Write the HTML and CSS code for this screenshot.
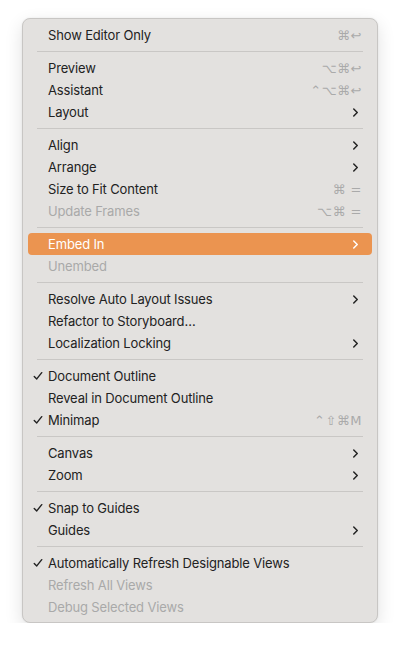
FILE: index.html
```html
<!DOCTYPE html>
<html>
<head>
<meta charset="utf-8">
<link rel="stylesheet" href="styles.css">
</head>
<body>
<div class="menu">
  <div class="item"><span class="check"></span><span class="label">Show Editor Only</span><span class="key">⌘↩</span></div>
  <div class="sep"></div>
  <div class="item"><span class="check"></span><span class="label">Preview</span><span class="key">⌥⌘↩</span></div>
  <div class="item"><span class="check"></span><span class="label">Assistant</span><span class="key">⌃⌥⌘↩</span></div>
  <div class="item"><span class="check"></span><span class="label">Layout</span><svg class="chev" viewBox="0 0 8 12"><path d="M2 2 L6 6 L2 10"/></svg></div>
  <div class="sep"></div>
  <div class="item"><span class="check"></span><span class="label">Align</span><svg class="chev" viewBox="0 0 8 12"><path d="M2 2 L6 6 L2 10"/></svg></div>
  <div class="item"><span class="check"></span><span class="label">Arrange</span><svg class="chev" viewBox="0 0 8 12"><path d="M2 2 L6 6 L2 10"/></svg></div>
  <div class="item"><span class="check"></span><span class="label">Size to Fit Content</span><span class="key">⌘ =</span></div>
  <div class="item disabled"><span class="check"></span><span class="label">Update Frames</span><span class="key">⌥⌘ =</span></div>
  <div class="sep"></div>
  <div class="item active"><span class="check"></span><span class="label">Embed In</span><svg class="chev" viewBox="0 0 8 12"><path d="M2 2 L6 6 L2 10"/></svg></div>
  <div class="item disabled"><span class="check"></span><span class="label">Unembed</span></div>
  <div class="sep"></div>
  <div class="item"><span class="check"></span><span class="label">Resolve Auto Layout Issues</span><svg class="chev" viewBox="0 0 8 12"><path d="M2 2 L6 6 L2 10"/></svg></div>
  <div class="item"><span class="check"></span><span class="label">Refactor to Storyboard…</span></div>
  <div class="item"><span class="check"></span><span class="label">Localization Locking</span><svg class="chev" viewBox="0 0 8 12"><path d="M2 2 L6 6 L2 10"/></svg></div>
  <div class="sep"></div>
  <div class="item"><span class="check"><svg viewBox="0 0 12 12"><path d="M1.5 6.5 L4.5 9.5 L10.5 2"/></svg></span><span class="label">Document Outline</span></div>
  <div class="item"><span class="check"></span><span class="label">Reveal in Document Outline</span></div>
  <div class="item"><span class="check"><svg viewBox="0 0 12 12"><path d="M1.5 6.5 L4.5 9.5 L10.5 2"/></svg></span><span class="label">Minimap</span><span class="key">⌃⇧⌘M</span></div>
  <div class="sep"></div>
  <div class="item"><span class="check"></span><span class="label">Canvas</span><svg class="chev" viewBox="0 0 8 12"><path d="M2 2 L6 6 L2 10"/></svg></div>
  <div class="item"><span class="check"></span><span class="label">Zoom</span><svg class="chev" viewBox="0 0 8 12"><path d="M2 2 L6 6 L2 10"/></svg></div>
  <div class="sep"></div>
  <div class="item"><span class="check"><svg viewBox="0 0 12 12"><path d="M1.5 6.5 L4.5 9.5 L10.5 2"/></svg></span><span class="label">Snap to Guides</span></div>
  <div class="item"><span class="check"></span><span class="label">Guides</span><svg class="chev" viewBox="0 0 8 12"><path d="M2 2 L6 6 L2 10"/></svg></div>
  <div class="sep"></div>
  <div class="item"><span class="check"><svg viewBox="0 0 12 12"><path d="M1.5 6.5 L4.5 9.5 L10.5 2"/></svg></span><span class="label">Automatically Refresh Designable Views</span></div>
  <div class="item disabled"><span class="check"></span><span class="label">Refresh All Views</span></div>
  <div class="item disabled"><span class="check"></span><span class="label">Debug Selected Views</span></div>
</div>
</body>
</html>
```
FILE: styles.css
```css
html, body {
  margin: 0;
  padding: 0;
  background: #ffffff;
}
body {
  padding: 18px 0 0 22px;
  font-family: Inter, "Noto Sans", sans-serif;
}
.menu {
  width: 354px;
  background: #e3e1df;
  border: 1px solid #c8c6c4;
  border-radius: 8px;
  padding: 5px 0 4px;
  box-shadow: 0 6px 18px rgba(0, 0, 0, 0.12), 0 0 2px rgba(0, 0, 0, 0.08);
}
.item {
  display: flex;
  align-items: center;
  height: 22px;
  margin: 0 5px;
  padding: 0 10px 0 5px;
  border-radius: 4px;
  font-size: 13px;
  letter-spacing: -0.15px;
  color: #222222;
}
.check {
  width: 15px;
  flex: none;
  display: flex;
  align-items: center;
}
.check svg {
  width: 10px;
  height: 10px;
  fill: none;
  stroke: #222222;
  stroke-width: 1.7;
  stroke-linecap: round;
  stroke-linejoin: round;
}
.label {
  flex: 1;
  white-space: nowrap;
}
.key {
  font-family: "DejaVu Sans", sans-serif;
  font-size: 13px;
  color: #aaaaaa;
  letter-spacing: 0.5px;
}
.chev {
  width: 7px;
  height: 11px;
  fill: none;
  stroke: #222222;
  stroke-width: 1.7;
  stroke-linecap: round;
  stroke-linejoin: round;
  margin-right: 3px;
}
.disabled {
  color: #a9a9a9;
}
.active {
  background: #eb9450;
  color: #ffffff;
}
.active .chev {
  stroke: #ffffff;
}
.sep {
  height: 11px;
  display: flex;
  align-items: center;
  margin: 0 14px;
}
.sep::before {
  content: "";
  flex: 1;
  height: 1px;
  background: #c9c7c5;
}
```
